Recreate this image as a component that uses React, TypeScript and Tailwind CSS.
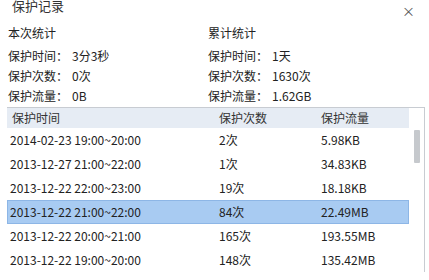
import React from 'react';

const font = { fontFamily: '"Noto Sans CJK SC", "Noto Sans", sans-serif' };

const rows = [
  ['2014-02-23 19:00~20:00', '2次', '5.98KB'],
  ['2013-12-27 21:00~22:00', '1次', '34.83KB'],
  ['2013-12-22 22:00~23:00', '19次', '18.18KB'],
  ['2013-12-22 21:00~22:00', '84次', '22.49MB'],
  ['2013-12-22 20:00~21:00', '165次', '193.55MB'],
  ['2013-12-22 19:00~20:00', '148次', '135.42MB'],
];

const StatRow: React.FC<{ label: string; value: string }> = ({ label, value }) => (
  <div className="flex h-5 items-center">
    <span>{label}：</span>
    <span className="ml-1">{value}</span>
  </div>
);

export default function App() {
  return (
    <div className="relative h-[280px] w-[429px] overflow-hidden bg-white text-[12px] text-[#222]" style={font}>
      <div className="-mt-[3px] flex h-[18px] items-center pl-[12px] text-[13px] text-[#333]">保护记录</div>
      <button className="absolute right-[14px] top-[4px] text-[13px] leading-none text-[#555]">×</button>

      <div className="mt-[8px] grid grid-cols-[200px_1fr] pl-[8px]">
        <div className="flex flex-col">
          <div className="mb-[3px] flex h-5 items-center">本次统计</div>
          <StatRow label="保护时间" value="3分3秒" />
          <StatRow label="保护次数" value="0次" />
          <StatRow label="保护流量" value="0B" />
        </div>
        <div className="flex flex-col">
          <div className="mb-[3px] flex h-5 items-center">累计统计</div>
          <StatRow label="保护时间" value="1天" />
          <StatRow label="保护次数" value="1630次" />
          <StatRow label="保护流量" value="1.62GB" />
        </div>
      </div>

      <div className="ml-[7px] mr-[4px] mt-[1px] border-r border-t border-[#c8ccd2]">
        <div className="flex">
          <div className="flex-1">
            <div className="grid h-[20px] grid-cols-[205px_102px_1fr] items-center bg-[#e6ecf4] text-[#333]">
              <span className="pl-[5px]">保护时间</span>
              <span className="pl-[7px]">保护次数</span>
              <span className="pl-[7px]">保护流量</span>
            </div>
            <div className="flex flex-col">
              {rows.map((r, i) => (
                <div
                  key={i}
                  className={
                    'grid h-[24px] grid-cols-[205px_102px_1fr] items-center ' +
                    (i === 3 ? 'border border-[#8db6e6] bg-[#a8cbf2]' : 'border border-transparent')
                  }
                >
                  <span className="pl-[2px]">{r[0]}</span>
                  <span className="pl-[6px]">{r[1]}</span>
                  <span className="pl-[6px]">{r[2]}</span>
                </div>
              ))}
            </div>
          </div>
          <div className="w-[15px] pt-[20px]">
            <div className="ml-[5px] mt-[2px] h-[33px] w-[6px] rounded-[1px] bg-[#c6c9cd]" />
          </div>
        </div>
      </div>
    </div>
  );
}
